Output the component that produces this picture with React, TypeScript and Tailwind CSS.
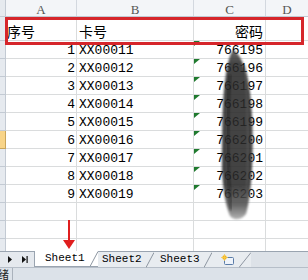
import React from 'react';

const data = [
  { n: 1, card: 'XX00011', pwd: '766195' },
  { n: 2, card: 'XX00012', pwd: '766196' },
  { n: 3, card: 'XX00013', pwd: '766197' },
  { n: 4, card: 'XX00014', pwd: '766198' },
  { n: 5, card: 'XX00015', pwd: '766199' },
  { n: 6, card: 'XX00016', pwd: '766200' },
  { n: 7, card: 'XX00017', pwd: '766201' },
  { n: 8, card: 'XX00018', pwd: '766202' },
  { n: 9, card: 'XX00019', pwd: '766203' },
];

const Slant = ({ w = 8 }: { w?: number }) => (
  <svg width={w} height="16" className="shrink-0 block">
    <line x1="0" y1="15.5" x2={w} y2="0.5" stroke="#8d96a1" strokeWidth="1" />
  </svg>
);

const App: React.FC = () => {
  return (
    <div className="relative w-[308px] h-[280px] overflow-hidden bg-white font-['Liberation_Mono','Noto_Sans_CJK_SC',monospace] text-black">
      {/* column headers */}
      <div className="flex h-[17px] overflow-hidden bg-[#f3f5f8] border-b border-[#c3cad3] font-['Liberation_Serif',serif] text-[13px] text-[#555]">
        <div className="w-[6px] bg-[#e6eaef] border-r border-[#c3cad3]" />
        <div className="w-[71px] border-r border-[#d3d8df] flex items-end justify-center leading-[13px]">A</div>
        <div className="w-[117px] border-r border-[#d3d8df] flex items-end justify-center leading-[13px]">B</div>
        <div className="w-[72px] border-r border-[#d3d8df] flex items-end justify-center leading-[13px]">C</div>
        <div className="flex-1 flex items-end justify-center leading-[13px]">D</div>
      </div>

      {/* title row */}
      <div className="flex h-[24px] text-[14px] font-['Noto_Sans_CJK_SC',sans-serif]">
        <div className="w-[6px] bg-[#e6eaef] border-r border-b border-[#c3cad3]" />
        <div className="w-[71px] border-r border-b border-[#dadcdd] flex items-end pl-[1px] leading-[17px]">序号</div>
        <div className="w-[117px] border-r border-b border-[#dadcdd] flex items-end pl-[2px] leading-[17px]">卡号</div>
        <div className="w-[72px] border-r border-b border-[#dadcdd] flex items-end justify-end pr-[2px] leading-[17px]">密码</div>
        <div className="flex-1 border-b border-[#dadcdd]" />
      </div>

      {/* data rows */}
      {data.map((r) => (
        <div key={r.n} className="flex h-[18px] text-[13px]">
          <div
            className={
              r.n === 6
                ? 'w-[6px] bg-[#f8d488] border-r border-b border-[#c9a55b]'
                : 'w-[6px] bg-[#e6eaef] border-r border-b border-[#c3cad3]'
            }
          />
          <div className="w-[71px] border-r border-b border-[#dadcdd] flex items-end justify-end pr-[1px] leading-[15px]">{r.n}</div>
          <div className="w-[117px] border-r border-b border-[#dadcdd] flex items-end pl-[2px] leading-[15px]">{r.card}</div>
          <div className="relative w-[72px] border-r border-b border-[#dadcdd] flex items-end justify-end pr-[2px] leading-[15px]">
            <svg width="6" height="5" className="absolute left-0 top-0">
              <polygon points="0,0 6,0 0,5" fill="#1f7a2e" />
            </svg>
            {r.pwd}
          </div>
          <div className="flex-1 border-b border-[#dadcdd]" />
        </div>
      ))}

      {/* empty rows */}
      {[0, 1].map((i) => (
        <div key={i} className="flex h-[18px]">
          <div className="w-[6px] bg-[#e6eaef] border-r border-b border-[#c3cad3]" />
          <div className="w-[71px] border-r border-b border-[#dadcdd]" />
          <div className="w-[117px] border-r border-b border-[#dadcdd]" />
          <div className="w-[72px] border-r border-b border-[#dadcdd]" />
          <div className="flex-1 border-b border-[#dadcdd]" />
        </div>
      ))}
      <div className="flex h-[12px]">
        <div className="w-[6px] bg-[#e6eaef] border-r border-[#c3cad3]" />
        <div className="w-[71px] border-r border-[#dadcdd]" />
        <div className="w-[117px] border-r border-[#dadcdd]" />
        <div className="w-[72px] border-r border-[#dadcdd]" />
        <div className="flex-1" />
      </div>

      {/* sheet tabs */}
      <div className="flex h-[16px] bg-[#dde2e8] text-[11px] leading-[14px]">
        <div className="w-[35px] shrink-0 border-t border-r border-[#9aa4b0] bg-[#e5e9ee] flex items-center">
          <svg width="35" height="15" className="block">
            <polygon points="8,4 12,7.5 8,11" fill="#111" />
            <polygon points="22,4 26,7.5 22,11" fill="#111" />
            <rect x="26.5" y="4" width="1.2" height="7" fill="#111" />
          </svg>
        </div>
        <div className="w-[55px] shrink-0 bg-white pl-[10px] border-b border-[#9aa4b0]">Sheet1</div>
        <div className="shrink-0 bg-white border-b border-[#9aa4b0]">
          <Slant />
        </div>
        <div className="w-[48px] shrink-0 pl-[4px] border-t border-[#9aa4b0] bg-[#e8ecf0]">Sheet2</div>
        <div className="shrink-0 border-t border-[#9aa4b0] bg-[#e8ecf0]">
          <Slant />
        </div>
        <div className="w-[50px] shrink-0 pl-[6px] border-t border-[#9aa4b0] bg-[#e8ecf0]">Sheet3</div>
        <div className="shrink-0 border-t border-[#9aa4b0] bg-[#e8ecf0]">
          <Slant />
        </div>
        <div className="w-[27px] shrink-0 pl-[9px] border-t border-[#9aa4b0] bg-[#e8ecf0] flex items-center">
          <svg width="14" height="12" className="block">
            <rect x="3.5" y="3.5" width="9" height="7" rx="1" fill="#eef3fa" stroke="#5a7ca8" />
            <circle cx="3.5" cy="3.5" r="2.2" fill="#f2b51c" />
            <path d="M3.5 0 L3.5 7 M0 3.5 L7 3.5" stroke="#f7c94a" strokeWidth="0.8" />
          </svg>
        </div>
        <div className="shrink-0 border-t border-[#9aa4b0] bg-[#e8ecf0]">
          <Slant w={12} />
        </div>
        <div className="flex-1 border-t border-[#9aa4b0]" />
      </div>

      {/* status bar */}
      <div className="flex h-[13px] bg-[#dce2e9] border-t border-[#b6bec8] overflow-hidden font-['Noto_Sans_CJK_SC',sans-serif] text-[11px] leading-[12px] text-[#222]">
        <div className="w-[13px] shrink-0 border-r border-[#aab2bc] overflow-hidden">
          <span className="block ml-[-13px] whitespace-nowrap">就绪</span>
        </div>
      </div>

      {/* red highlight box */}
      <div className="absolute left-[5px] top-[17px] w-[299px] h-[28px] border-[3px] border-[#d6262b]" />

      {/* red arrow */}
      <div className="absolute left-[68px] top-[220px] w-[2px] h-[21px] bg-[#e01e1e]" />
      <svg width="12" height="10" className="absolute left-[63px] top-[240px]">
        <polygon points="0,0 12,0 6,9" fill="#e01e1e" />
      </svg>

      {/* brush smear */}
      <svg width="46" height="180" className="absolute left-[215px] top-[45px]" viewBox="0 0 46 180">
        <defs>
          <linearGradient id="smear" x1="0" y1="0" x2="0" y2="1">
            <stop offset="0" stopColor="#555" />
            <stop offset="0.08" stopColor="#2c2c2c" />
            <stop offset="0.8" stopColor="#2a2a2a" />
            <stop offset="0.92" stopColor="#555" />
            <stop offset="1" stopColor="#aaa" />
          </linearGradient>
          <filter id="soft" x="-20%" y="-10%" width="140%" height="120%">
            <feGaussianBlur stdDeviation="1.3" />
          </filter>
        </defs>
        <path
          d="M18 5 C14 10 11 25 9 45 C7 65 7 100 7 125 C8 145 11 162 15 171 C18 175 26 176 31 169 C35 155 37 130 37.5 110 C38 85 37 55 33 35 C30 20 24 8 18 5 Z"
          fill="url(#smear)"
          opacity="0.88"
          filter="url(#soft)"
        />
        <path d="M30 20 C33 60 34 110 31 160" stroke="#666" strokeWidth="1.5" fill="none" opacity="0.5" filter="url(#soft)" />
        <path d="M15 30 C12 70 12 120 16 165" stroke="#111" strokeWidth="2" fill="none" opacity="0.5" filter="url(#soft)" />
      </svg>
    </div>
  );
};

export default App;
